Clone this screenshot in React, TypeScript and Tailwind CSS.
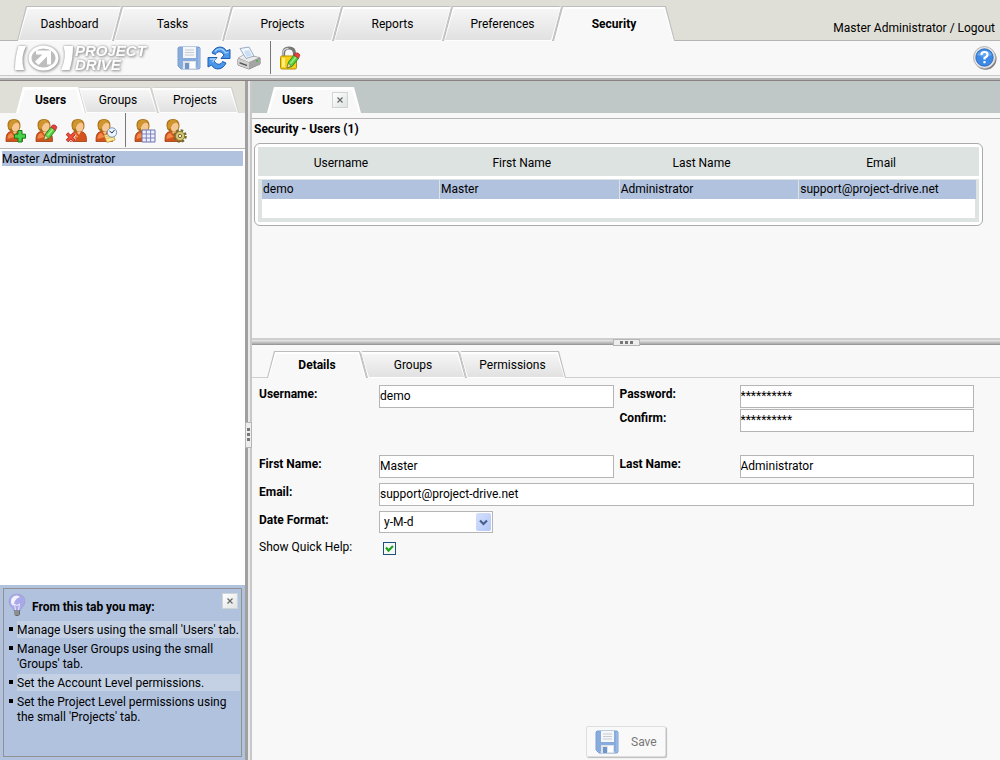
import React from "react";

const FONT = "font-['Roboto','Open_Sans',sans-serif]";

type TabKind = "leanLeft" | "leanRight" | "active" | "activeWide";

const clips: Record<TabKind, string> = {
  leanLeft: "[clip-path:polygon(9px_0,100%_0,calc(100%-9px)_100%,0_100%)]",
  leanRight: "[clip-path:polygon(0_0,calc(100%-7px)_0,100%_100%,7px_100%)]",
  active: "[clip-path:polygon(7px_0,calc(100%-7px)_0,100%_100%,0_100%)]",
  activeWide: "[clip-path:polygon(9px_0,calc(100%-9px)_0,100%_100%,0_100%)]",
};

function Tab({
  label,
  kind,
  className,
  edge = "bg-[#bdbdbd]",
  children,
}: {
  label: string;
  kind: TabKind;
  className: string;
  edge?: string;
  children?: React.ReactNode;
}) {
  const on = kind === "active" || kind === "activeWide";
  const clip = clips[kind];
  return (
    <div className={`relative isolate flex items-center ${on ? "z-10" : ""} ${className}`}>
      <span className={`absolute inset-0 -z-10 rounded-t ${edge} ${clip}`} />
      <span className={`absolute inset-x-px top-px bottom-0 -z-10 bg-white ${clip}`} />
      <span
        className={`absolute inset-x-[2px] top-[3px] -z-10 ${clip} ${
          on ? "bottom-0 bg-[#f8f8f8]" : "bottom-px bg-linear-to-b from-[#f6f6f6] to-[#e1e1e1]"
        }`}
      />
      <button
        type="button"
        role="tab"
        aria-selected={on}
        className={`h-full flex-1 pt-px text-center ${on ? "font-bold" : ""}`}
      >
        {label}
      </button>
      {children}
    </div>
  );
}

function CloseButton({ className = "" }: { className?: string }) {
  return (
    <button
      type="button"
      aria-label="Close"
      className={`flex size-4 shrink-0 items-center justify-center border border-[#cfd4d4] bg-linear-to-br from-white to-[#dfe3e3] ${className}`}
    >
      <svg viewBox="0 0 6 6" className="size-[6px]">
        <path d="M.5 .5L5.5 5.5M5.5 .5L.5 5.5" stroke="#666" strokeWidth="1.2" />
      </svg>
    </button>
  );
}

function Floppy() {
  return (
    <svg viewBox="0 0 24 24" className="size-6">
      <path d="M2 1h20l1 1v20l-1 1H4l-3-3V2z" fill="#86abdc" stroke="#7c9fd0" />
      <path d="M22 2v20H5" fill="none" stroke="#a9c4e8" />
      <path d="M6 1h13v11H6z" fill="#f4f6f7" />
      <path d="M8 4h9M8 6.500h9M8 9h9" stroke="#c5ccd3" />
      <path d="M6 15h13v8H6z" fill="#dfe3e6" />
      <path d="M8 17h4v6H8z" fill="#6e96cd" />
      <path d="M13 16h5v6h-5z" fill="#fff" />
    </svg>
  );
}

function Refresh() {
  return (
    <svg viewBox="0 0 24 24" className="size-6">
      <g fill="#4b97ea" stroke="#1c5cb0" strokeWidth="1" strokeLinejoin="round">
        <path d="M5 7C8 0 16-1 19.500 5L23 3.500V12.500H14L17 9C14 4.500 10 5 8.500 8.500z" />
        <path d="M19 17C16 24 8 25 4.500 19L1 21V11.500H10L7 15C10 19.500 14 19 15.500 15.500z" />
      </g>
      <path d="M8 5.500C11 1.500 16 2 18.500 7L21.500 6M3 13h5L5.500 16" fill="none" stroke="#a5d2ff" strokeWidth="1.300" />
    </svg>
  );
}

function Printer() {
  return (
    <svg viewBox="0 0 24 24" className="size-6">
      <path d="M1 13l6-4 16 3v6l-11 5-11-4z" fill="#888" stroke="#777" />
      <path d="M1 12l6-3.500 16 3-11 5z" fill="#ececec" stroke="#999" strokeWidth=".6" />
      <path d="M1 12.500l11 4v6.500L1 19z" fill="#d2d2d2" />
      <path d="M12 16.500l11-4.500v6.500L12 23z" fill="#a4a4a4" />
      <path d="M3 2.500L12 1l5 9-8 2.500z" fill="#f1f7fe" stroke="#8ea3ba" strokeWidth=".9" />
      <path d="M7 5l5-1 3 5.500-5.500 1.500z" fill="#cbdff4" />
      <path d="M2.500 16l7.500 2.700v1.500L2.500 17.500z" fill="#555" />
      <circle cx="20" cy="15" r="1.100" fill="#42b942" />
    </svg>
  );
}

function Pencil() {
  return (
    <g>
      <path d="M9 22l1.500-6L16 9l4.500 3.500-6.500 8z" fill="#56cf3f" stroke="#247b1d" strokeWidth=".8" />
      <path d="M12.500 17.500l5.500-6.500" stroke="#a5ef8c" strokeWidth="1.400" />
      <path d="M9 22l1.300-4.500 2.700 2.500z" fill="#fae0ad" stroke="#8c6a33" strokeWidth=".5" />
      <path d="M16 9l1.500-2q3-.8 4.500 2l-1.500 3.500z" fill="#e8423e" stroke="#a61f1f" strokeWidth=".6" />
    </g>
  );
}

function LockEdit() {
  return (
    <svg viewBox="0 0 26 24" className="h-6 w-[26px]">
      <path d="M5.500 12V7.500q0-5.500 5.500-5.500T16.500 7.500V12" fill="none" stroke="#777" strokeWidth="3.200" />
      <path d="M5 11V7.500q0-5 5.500-5" fill="none" stroke="#ccc" strokeWidth="1.300" />
      <rect x="2.500" y="10" width="16" height="13" rx="1.500" fill="#f7cf17" stroke="#b88b00" />
      <path d="M4 12h3v9H4z" fill="#fff07b" />
      <Pencil />
    </svg>
  );
}

function Help() {
  return (
    <svg viewBox="0 0 24 24" className="size-6">
      <circle cx="12.500" cy="12.800" r="11" fill="#777" />
      <circle cx="11.500" cy="11.500" r="11" fill="#e6e6e6" stroke="#aaa" strokeWidth=".8" />
      <circle cx="11.500" cy="11.500" r="8.700" fill="#3d89e5" stroke="#2462b4" strokeWidth=".8" />
      <path d="M4 9a8 7 0 0 1 15 0q-7 4-15 0" fill="#72b0f5" opacity=".7" />
      <path d="M8.500 9q0-3 3-3t3 2.500q0 2-3 3.500v1.500M11.500 15v2.300" fill="none" stroke="#fff" strokeWidth="2.200" />
    </svg>
  );
}

function UserIcon({ viewBox = "0 0 26 25", children }: { viewBox?: string; children: React.ReactNode }) {
  return (
    <svg viewBox={viewBox} className="h-[25px] w-[26px]">
      <path d="M1 23.500Q.5 14 6 13.500h6q6 .5 5.500 10z" fill="#d4531c" stroke="#9d3a0d" strokeWidth=".8" />
      <path d="M2.500 21q0-5.500 4-6l3 4z" fill="#f18a48" />
      <path d="M7.500 13.500h4.500l-2 3.500z" fill="#f6c08a" />
      <path d="M2.500 8q-.5-7 6.500-7 6.500 0 6.500 7 0 5.500-6 6Q3 14 2.500 8" fill="#a86d15" />
      <path d="M6.500 9q0-5 4.500-5 3.500 0 3.500 4.500-.5 5-4 5.200T6.500 9" fill="#f7c793" />
      <path d="M3.500 9Q3 2 9 1.800q3.500 0 5 2.700-4 0-5.500 2Q6.500 11 5 11 3.800 10.500 3.500 9" fill="#cf9630" />
      {children}
    </svg>
  );
}

const plus = <path d="M13 12.500h4v3.700h3.500v4H17V24h-4v-3.800H9.500v-4H13z" fill="#4ad04a" stroke="#117d1a" strokeWidth="1" />;
const cross = (
  <g>
    <path d="M-2 15.500l7.500 7.500M5.500 15.500L-2 23" stroke="#fff" strokeWidth="4.600" />
    <path d="M-2 15.500l7.500 7.500M5.500 15.500L-2 23" stroke="#a51d14" strokeWidth="3.400" />
    <path d="M-1.700 15.800l6.900 6.900M5.200 15.800l-6.900 6.900" stroke="#f2503a" strokeWidth="2.200" />
  </g>
);
const clock = (
  <g>
    <path d="M9 17l9-2 2 7-8 2.500z" fill="#ffe78e" stroke="#b79438" strokeWidth=".7" />
    <path d="M11 18.500l7-1.500M11.500 20.500l7-1.500" stroke="#cba547" strokeWidth=".7" />
    <circle cx="17" cy="14.500" r="4.700" fill="#eaf5ff" stroke="#7b96b2" />
    <path d="M14.500 13l2.500 2 2.500-3" fill="none" stroke="#234" strokeWidth="1" />
  </g>
);
const gridMark = (
  <g>
    <path d="M8 12h13v12H8z" fill="#eef0ff" stroke="#6b71a8" />
    <path d="M12.300 12v12M16.600 12v12M8 16h13M8 20h13" stroke="#8085b8" />
  </g>
);
const gear = (
  <g>
    <circle cx="16" cy="18" r="5.300" fill="none" stroke="#75692a" strokeWidth="3" strokeDasharray="2.400 1.760" />
    <circle cx="16" cy="18" r="4.600" fill="#d4c673" stroke="#85783a" strokeWidth=".9" />
    <circle cx="16" cy="18" r="1.700" fill="#f5f0d8" stroke="#6d6128" strokeWidth=".9" />
  </g>
);

function Bulb() {
  return (
    <svg viewBox="0 0 18 24" className="h-6 w-[18px]">
      <path d="M9 1q7.500 .5 8 7 0 4-3.500 7L12 18H6l-1.500-3Q.5 12 1 8 1.500 1.500 9 1" fill="#a9a9ea" stroke="#9a9ac9" strokeWidth=".6" />
      <path d="M8 2.500Q2 4 3 10q1 2.500 2.500 3Q6 6 12 4q-2-2-4-1.500" fill="#fff" opacity=".85" />
      <path d="M7.500 17l-1-6 2.500 1.500 2.500-1.500-1 6" fill="none" stroke="#f4f4ff" strokeWidth=".9" />
      <path d="M6 17.500h6v4l-2 1.500H8l-2-1.500z" fill="#666" />
      <path d="M6 19h5M6 21h5" stroke="#ccc" strokeWidth=".8" />
    </svg>
  );
}

function Logo() {
  return (
    <div className="flex items-center text-white [filter:drop-shadow(0_0_1px_#999)_drop-shadow(1px_1px_1px_#aaa)]">
      <svg viewBox="0 0 59 26" className="h-[26px] w-[59px]">
        <path d="M3.500 1H11Q5 13 9 25H0Q0 12 3.500 1M48.500 1H58Q58 14 54.500 25h-8.500Q52 12 48.500 1" fill="#fff" />
        <ellipse cx="28.500" cy="13" rx="13.500" ry="11" fill="#bdbdbd" stroke="#fff" strokeWidth="3" />
        <path d="M21 5.500H36v14h-4v-8L23.500 20 20 16.500l7.500-7H21z" fill="#fff" />
      </svg>
      <span className="w-[86px] pl-px font-['Liberation_Sans',Arial,sans-serif] text-[15px] leading-[14px] font-bold italic">
        PROJECT
        <br />
        DRIVE
      </span>
    </div>
  );
}

function IconButton({ label, children }: { label: string; children: React.ReactNode }) {
  return (
    <button type="button" aria-label={label} className="flex shrink-0">
      {children}
    </button>
  );
}

const field = "h-[23px] w-full min-w-0 border border-[#b5b5b5] bg-white px-0 pb-px outline-none";
const title = "pb-1 font-bold";

const tips = [
  "Manage Users using the small 'Users' tab.",
  "Manage User Groups using the small 'Groups' tab.",
  "Set the Account Level permissions.",
  "Set the Project Level permissions using the small 'Projects' tab.",
];

export default function App() {
  return (
    <div className={`flex h-screen flex-col overflow-hidden bg-[#f8f8f8] text-[12px] leading-[15px] text-black ${FONT}`}>
      <header className="flex h-[41px] shrink-0 items-end justify-between border-b border-[#b5b5b5] bg-[#dfdfd7]">
        <nav role="tablist" className="-mb-px flex h-[35px] pl-[17px]">
          <Tab label="Dashboard" kind="leanLeft" className="-mr-[9px] w-[105px]" />
          <Tab label="Tasks" kind="leanLeft" className="-mr-[9px] w-[119px]" />
          <Tab label="Projects" kind="leanLeft" className="-mr-[9px] w-[119px]" />
          <Tab label="Reports" kind="leanLeft" className="-mr-[9px] w-[119px]" />
          <Tab label="Preferences" kind="leanLeft" className="-mr-[9px] w-[119px]" />
          <Tab label="Security" kind="activeWide" className="w-[122px]" />
        </nav>
        <p className="pr-[5px] pb-1">
          Master Administrator / <a href="#logout">Logout</a>
        </p>
      </header>

      <div className="flex h-[35px] shrink-0 items-center border-b border-[#c8c8c8] pr-[3px] pl-[15px]">
        <Logo />
        <div className="flex items-center gap-[6px] pl-[17px]">
          <IconButton label="Save"><Floppy /></IconButton>
          <IconButton label="Refresh"><Refresh /></IconButton>
          <IconButton label="Print"><Printer /></IconButton>
        </div>
        <span className="mr-[7px] ml-[9px] h-[33px] w-px self-start bg-[#777]" />
        <IconButton label="Edit permissions"><LockEdit /></IconButton>
        <span className="flex-1" />
        <IconButton label="Help"><Help /></IconButton>
      </div>
      <div className="h-[5px] shrink-0 border-t-2 border-b border-t-[#f0f0f0] border-b-[#8a8282] bg-[#b3b3b3]" />

      <div className="flex min-h-0 flex-1">
        <aside className="flex w-[245px] shrink-0 flex-col bg-white">
          <div className="flex h-8 items-end bg-[#dfdfd7] pl-4" role="tablist">
            <Tab label="Users" kind="active" edge="bg-white" className="-mr-[7px] h-[26px] w-[69px]" />
            <Tab label="Groups" kind="leanRight" edge="bg-[#d0d0cc]" className="-mr-[7px] h-[26px] w-[80px]" />
            <Tab label="Projects" kind="leanRight" edge="bg-[#d0d0cc]" className="h-[26px] w-[88px]" />
          </div>
          <div className="flex h-9 items-center gap-1 border-b border-[#b5b5b5] bg-[#f8f8f8] pl-[5px]">
            <IconButton label="Add user"><UserIcon>{plus}</UserIcon></IconButton>
            <IconButton label="Edit user"><UserIcon><Pencil /></UserIcon></IconButton>
            <IconButton label="Delete user"><UserIcon viewBox="-4 0 26 25">{cross}</UserIcon></IconButton>
            <IconButton label="User schedule"><UserIcon>{clock}</UserIcon></IconButton>
            <span className="mr-1 h-[34px] w-px self-start bg-[#777]" />
            <IconButton label="User table"><UserIcon>{gridMark}</UserIcon></IconButton>
            <IconButton label="User settings"><UserIcon>{gear}</UserIcon></IconButton>
          </div>
          <ul className="flex-1 py-[2px] pr-[2px] pl-[2px]">
            <li className="bg-[#b1c2de] pt-px leading-[14px]">Master Administrator</li>
          </ul>
          <section className="h-[175px] bg-[#b1c2de] p-[3px]">
            <div className="h-[169px] border border-[#919191] pt-1 pr-[3px] pl-1">
              <div className="flex items-start">
                <Bulb />
                <h2 className="flex-1 pt-[7px] pl-[6px] font-bold">From this tab you may:</h2>
                <CloseButton />
              </div>
              <ul className="-mr-[2px] flex flex-col gap-[2px] pt-1">
                {tips.map((t, i) => (
                  <li key={t} className="flex gap-1">
                    <span className="mt-[6px] ml-px size-1 shrink-0 bg-black" />
                    <span className={`min-w-0 flex-1 pt-[2px] ${i % 2 === 0 ? "bg-[#c4d1e5]" : ""}`}>{t}</span>
                  </li>
                ))}
              </ul>
            </div>
          </section>
        </aside>

        <div className="flex w-[7px] shrink-0 items-center border-r-2 border-l-[3px] border-r-[#c8c8c8] border-l-[#a0a0a0] bg-[#eaeaea]">
          <span className="-mx-[3px] mt-7 flex h-[26px] w-[7px] shrink-0 flex-col items-center justify-center gap-[2px] border border-[#b5b5b5] bg-[#ededed]">
            <span className="size-[3px] bg-[#777]" />
            <span className="size-[3px] bg-[#777]" />
            <span className="size-[3px] bg-[#777]" />
          </span>
        </div>

        <main className="flex min-w-0 flex-1 flex-col">
          <div className="flex h-8 shrink-0 items-end bg-[#bfc8c6] pl-[15px]" role="tablist">
            <Tab label="Users" kind="active" edge="bg-white" className="h-[26px] w-[94px] pr-[13px]">
              <CloseButton className="ml-1" />
            </Tab>
          </div>
          <div className="h-[6px] shrink-0 border-b border-[#b5b5b5]" />
          <section className="h-[219px] shrink-0 pt-[3px] pr-[17px] pl-[2px]">
            <h1 className="font-bold">Security - Users (1)</h1>
            <div className="mt-[6px] rounded-md border border-[#aaaaaa] bg-white p-[3px]">
              <table className="w-full table-fixed border-separate border-spacing-0">
                <thead>
                  <tr>
                    {["Username", "First Name", "Last Name", "Email"].map((h) => (
                      <th
                        key={h}
                        className="h-8 border-b-[3px] border-white bg-[#dde3e1] pt-1 pr-4 pb-0 pl-0 text-center font-normal first:w-[182px]"
                      >
                        {h}
                      </th>
                    ))}
                  </tr>
                </thead>
                <tbody>
                  <tr>
                    {["demo", "Master", "Administrator", "support@project-drive.net"].map((c) => (
                      <td
                        key={c}
                        className="h-5 border-t border-r border-[#dde3e1] bg-[#b1c2de] p-0 pl-px first:border-l-4 last:border-r-[3px]"
                      >
                        {c}
                      </td>
                    ))}
                  </tr>
                  <tr>
                    <td colSpan={4} className="h-[23px] border-r-[4px] border-b-[4px] border-l-4 border-[#dde3e1] bg-white p-0" />
                  </tr>
                </tbody>
              </table>
            </div>
          </section>

          <div className="flex h-[7px] shrink-0 items-center justify-center border-t-2 border-b border-t-[#cfcfcf] border-b-[#999] bg-linear-to-b from-[#eaeaea] to-[#a8a8a8]">
            <span className="flex h-[7px] w-[27px] shrink-0 items-center justify-center gap-[2px] border border-[#b5b5b5] bg-[#ededed]">
              <span className="size-[3px] bg-[#777]" />
              <span className="size-[3px] bg-[#777]" />
              <span className="size-[3px] bg-[#777]" />
            </span>
          </div>

          <div className="flex h-[33px] shrink-0 items-end border-b border-[#cfcfcf] pl-[15px]" role="tablist">
            <Tab label="Details" kind="active" className="-mr-[7px] -mb-px h-[27px] w-[100px]" />
            <Tab label="Groups" kind="leanRight" className="-mr-[7px] -mb-px h-[27px] w-[106px]" />
            <Tab label="Permissions" kind="leanRight" className="-mb-px h-[27px] w-[107px]" />
          </div>

          <form className="flex min-h-0 flex-1 flex-col pt-[7px] pb-[2px]" onSubmit={(e) => e.preventDefault()}>
            <div className="grid grid-cols-[120px_minmax(0,1fr)_126px_minmax(0,1fr)] items-center pr-[26px] pl-[7px]">
              <label htmlFor="username" className={title}>Username:</label>
              <input id="username" className={field} defaultValue="demo" />
              <label htmlFor="password" className={`${title} pl-[6px]`}>Password:</label>
              <input id="password" className={field} defaultValue="**********" />
              <label htmlFor="confirm" className={`${title} col-start-3 mt-px pl-[6px]`}>Confirm:</label>
              <input id="confirm" className={`${field} mt-px`} defaultValue="**********" />
            </div>
            <div className="grid grid-cols-[120px_minmax(0,1fr)_126px_minmax(0,1fr)] items-center gap-y-[5px] pt-[23px] pr-[26px] pl-[7px]">
              <label htmlFor="first" className={title}>First Name:</label>
              <input id="first" className={field} defaultValue="Master" />
              <label htmlFor="last" className={`${title} pl-[6px]`}>Last Name:</label>
              <input id="last" className={field} defaultValue="Administrator" />
              <label htmlFor="email" className={title}>Email:</label>
              <input id="email" className={`${field} col-span-3`} defaultValue="support@project-drive.net" />
              <label htmlFor="format" className="pb-1 font-bold">Date Format:</label>
              <div className="relative col-span-3 w-[114px]">
                <select id="format" className="block h-[22px] w-full appearance-none border border-[#b5b5b5] bg-white pl-1 outline-none">
                  <option>y-M-d</option>
                </select>
                <span className="pointer-events-none absolute top-[2px] right-[2px] flex h-[18px] w-[15px] items-center justify-center rounded-xs bg-linear-to-br from-[#d5e0fd] to-[#b2c7f8]">
                  <svg viewBox="0 0 9 7" className="h-[7px] w-[9px]">
                    <path d="M1 1.500l3.500 3.500L8 1.500" fill="none" stroke="#48608d" strokeWidth="2.200" />
                  </svg>
                </span>
              </div>
              <label htmlFor="quick" className="pt-[2px]">Show Quick Help:</label>
              <div className="relative col-span-3 mt-[3px] ml-1 size-[13px]">
                <input
                  id="quick"
                  type="checkbox"
                  defaultChecked
                  className="peer block size-[13px] appearance-none border border-[#1c5180] bg-[#f6f6f4]"
                />
                <svg viewBox="0 0 13 13" className="pointer-events-none absolute inset-0 hidden size-[13px] peer-checked:block">
                  <path d="M3 5.500l2.500 3L10 4" fill="none" stroke="#21a121" strokeWidth="2.200" />
                </svg>
              </div>
            </div>
            <button
              type="submit"
              className="mt-auto mb-px flex h-[31px] w-20 items-center gap-3 self-center rounded-xs border border-[#dedede] bg-[#f9f9f9] pl-2 text-[#777] shadow-[1px_1px_1px_#bbb]"
            >
              <Floppy />
              <span className="pt-px">Save</span>
            </button>
          </form>
        </main>
      </div>
    </div>
  );
}
